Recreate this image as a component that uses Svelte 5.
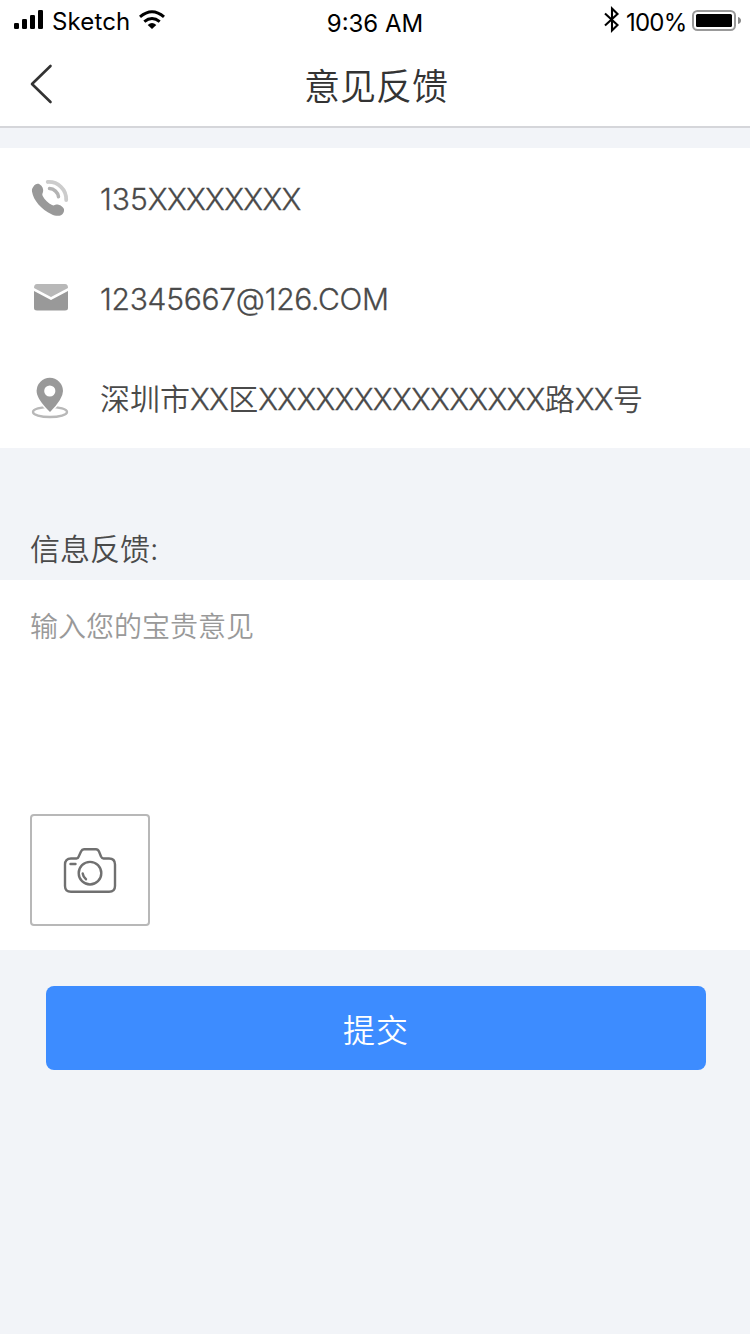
<script>
  const placeholder = '输入您的宝贵意见';
</script>

<div class="page">
  <header>
    <div class="status">
      <div class="carrier">
        <svg class="signal" width="30" height="20" viewBox="0 0 30 20">
          <rect x="0" y="13" width="5" height="6" rx="1.3" />
          <rect x="8" y="9" width="5" height="10" rx="1.3" />
          <rect x="16" y="5" width="5" height="14" rx="1.3" />
          <rect x="24" y="0" width="5" height="19" rx="1.3" />
        </svg>
        <span class="name">Sketch</span>
        <svg class="wifi" width="28" height="20" viewBox="0 0 28 20">
          <path d="M2 6.800Q14-3.400 26 6.800M6.300 11.600Q14 5.400 21.700 11.600" fill="none" stroke="#000" stroke-width="3" />
          <path d="M9.700 15Q14 11.200 18.300 15L14 19Z" />
        </svg>
      </div>
      <span class="time">9:36 AM</span>
      <div class="power">
        <svg class="bluetooth" width="16" height="28" viewBox="0 0 16 28">
          <path d="M1 7.500L13.500 19L8 24.500V2.500L13.500 8L1 19.500" fill="none" stroke="#000" stroke-width="2.100" />
        </svg>
        <span class="percent">100%</span>
        <svg class="battery" width="49" height="22" viewBox="0 0 49 22">
          <rect x="1" y="1" width="42" height="19" rx="4.500" fill="none" stroke="#999" stroke-width="2" />
          <rect x="4" y="4" width="36" height="13" rx="1.500" />
          <path d="M46 7Q49 8 49 10.500T46 14Z" fill="#888" />
        </svg>
      </div>
    </div>
    <div class="nav">
      <svg class="back" width="24" height="40" viewBox="0 0 24 40">
        <path d="M21.500 2L3 20L21.500 38" fill="none" stroke="#333" stroke-width="2.600" stroke-linecap="round" stroke-linejoin="round" />
      </svg>
      <h1>意见反馈</h1>
    </div>
  </header>

  <section class="contacts">
    <div class="row">
      <svg width="40" height="44" viewBox="0 0 40 44">
        <path d="M3.500 10.500C5 8 7.500 7.300 9.500 8.300C12.500 10 13.800 13.500 13 16C12.500 17.700 11.900 18.200 12.700 20C14.500 23.800 18.500 27.300 22 29C24 30 24.300 29 26.300 28.600C29.500 28.300 33.200 30.800 34 33.200C34.500 35.500 33 38.200 31 39.200C28.500 40.400 24.500 39.800 21.500 38.300C11.500 33.300 3.300 24.500 2 15.500C1.700 13.500 2.300 12 3.500 10.500Z" fill="#999" />
        <path d="M19.500 12.600C24 12.800 28 16.300 28.500 20.800" fill="none" stroke="#b3b3b3" stroke-width="3.500" stroke-linecap="round" />
        <path d="M17.700 6C28 5.500 36.500 13.200 36.200 24" fill="none" stroke="#ccc" stroke-width="3.800" stroke-linecap="round" />
      </svg>
      <span class="phone">135<span class="mask">XXXXXXXX</span></span>
    </div>
    <div class="row">
      <svg width="40" height="44" viewBox="0 0 40 44">
        <path d="M4 12Q4 8 7 8H35Q38 8 38 12L21 21Z" fill="#b8b8b8" />
        <path d="M4 15L21 24L38 15V32Q38 34.500 35 34.500H7Q4 34.500 4 32Z" fill="#999" />
      </svg>
      <span class="email">12345667@126.COM</span>
    </div>
    <div class="row">
      <svg width="40" height="44" viewBox="0 0 40 44">
        <ellipse cx="20" cy="36" rx="17" ry="5" fill="none" stroke="#b8b8b8" stroke-width="2.400" />
        <path d="M20 36Q33 23 33 15A13.200 13.200 0 0 0 6.600 15Q6.600 23 20 36Z" fill="#999" stroke="#fff" stroke-width="3" paint-order="stroke" />
        <circle cx="19.800" cy="15" r="5.600" fill="#fff" />
      </svg>
      <span class="address">深圳市<span class="mask">XX</span>区<span class="mask">XXXXXXXXXXXXXXX</span>路<span class="mask">XX</span>号</span>
    </div>
  </section>

  <h2>信息反馈:</h2>

  <section class="feedback">
    <p>{placeholder}</p>
    <button class="photo" aria-label="camera">
      <svg width="54" height="46" viewBox="0 0 54 46" fill="none" stroke="#707070" stroke-width="2.400" stroke-linecap="round" stroke-linejoin="round">
        <path d="M8 11.500H13.500Q15 11.500 15.700 9.500L18 4.500Q19 2.200 21 2.200H33Q35 2.200 36 4.500L38 9.500Q39 11.500 40.500 11.500H46Q52 11.500 52 17.500V39Q52 44.700 46 44.700H8Q2 44.700 2 39V17.500Q2 11.500 8 11.500Z" />
        <circle cx="27" cy="26.200" r="11.300" />
        <path d="M7.500 17H12.500M19.700 26.500Q20.200 30 23 32.300" />
      </svg>
    </button>
  </section>

  <button class="submit">提交</button>
</div>

<style>
  :global(body) { background: #f2f4f8; }
  .page {
    width: 750px;
    height: 1334px;
    background: #f2f4f8;
    font-family: Inter, "Noto Sans CJK SC", sans-serif;
    font-weight: 350;
    color: #4a4a4a;
    overflow: hidden;
  }
  svg { display: block; flex: none; }
  header {
    box-sizing: border-box;
    height: 128px;
    background: #fff;
    border-bottom: 2px solid #d5d6da;
  }
  .status {
    display: grid;
    grid-template-columns: 250px 250px 250px;
    height: 40px;
    color: #000;
    font-weight: 400;
    font-size: 24px;
    line-height: 30px;
    white-space: nowrap;
  }
  .carrier { display: flex; padding-left: 14px; }
  .signal { margin-top: 10px; }
  .name { width: 86px; margin-left: 8px; padding-top: 7px; letter-spacing: .15px; }
  .wifi { margin-top: 10px; }
  .time { padding-top: 9px; text-align: center; }
  .power { display: flex; justify-content: flex-end; padding-right: 9px; }
  .bluetooth { margin-top: 6px; }
  .percent { width: 66px; margin-left: 6px; padding-top: 8px; letter-spacing: -.8px; }
  .battery { margin-top: 10px; }
  .nav {
    display: grid;
    grid-template-columns: 100px 1fr 98px;
    align-items: center;
    height: 88px;
  }
  .back { margin-left: 29px; }
  h1 { margin: 0; padding-top: 5px; text-align: center; font-size: 36px; font-weight: 350; line-height: 52px; color: #333; }
  .contacts { height: 300px; margin-top: 20px; background: #fff; }
  .row { display: flex; align-items: center; gap: 30px; height: 100px; padding-left: 30px; font-size: 30px; white-space: nowrap; }
  .phone, .email { padding-top: 2px; }
  .address { padding-bottom: 2px; }
  .phone, .email, .mask { -webkit-text-stroke: .3px #4a4a4a; }
  .email { letter-spacing: -.27px; }
  .mask { letter-spacing: -.75px; }
  h2 { height: 61px; margin: 0; padding: 71px 30px 0; font-size: 30px; font-weight: 350; line-height: 60px; }
  .feedback { box-sizing: border-box; height: 370px; padding: 27px 30px 24px; background: #fff; }
  p { height: 207px; margin: 0; font-size: 28px; line-height: 40px; color: #999; }
  .photo {
    display: flex;
    align-items: center;
    justify-content: center;
    box-sizing: border-box;
    width: 120px;
    height: 112px;
    padding: 0;
    border: 2px solid #b8b8b8;
    border-radius: 4px;
    background: #fff;
  }
  .submit {
    display: block;
    width: 660px;
    height: 84px;
    margin: 36px 0 0 46px;
    padding: 0;
    border: 0;
    border-radius: 8px;
    background: #3d8cff;
    color: #fff;
    font: 350 32px/84px "Noto Sans CJK SC", sans-serif;
    letter-spacing: 1px;
  }
</style>
